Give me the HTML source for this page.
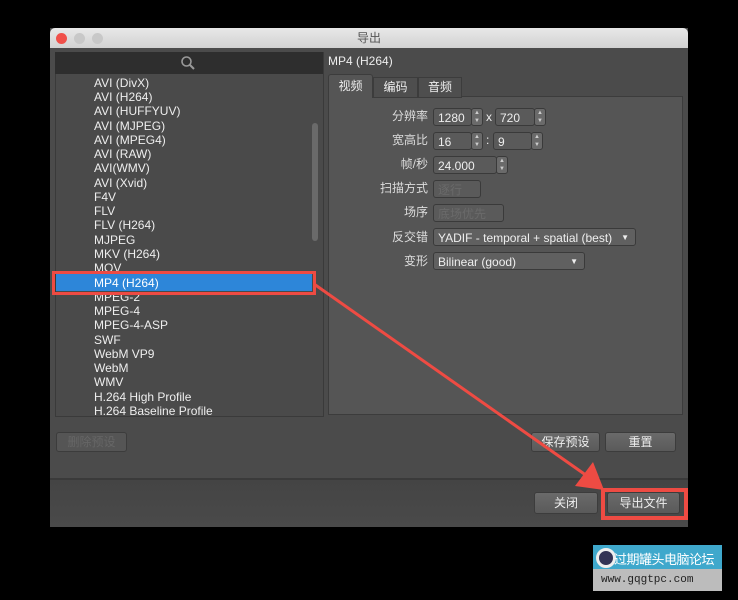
<!DOCTYPE html>
<html><head><meta charset="utf-8"><style>
body{margin:0;width:738px;height:600px;background:#000;position:relative;overflow:hidden;font-family:"Liberation Sans","Noto Sans CJK SC",sans-serif;}
.a{position:absolute}
.win{left:50px;top:28px;width:638px;height:499px;background:#4b4b4b;}
.title{left:50px;top:28px;width:638px;height:20px;background:linear-gradient(#e8e8e8,#d2d2d2);border-radius:5px 5px 0 0;text-align:center;font-size:12px;color:#555;line-height:20px}
.dot{width:11px;height:11px;border-radius:50%;top:33px}
.list{left:55px;top:52px;width:267px;height:363px;background:#4a4a4a;border:1px solid #3a3a3a;overflow:hidden}
.search{left:55px;top:52px;width:268px;height:22px;background:#2e2e2e}
.item{position:absolute;left:38px;font-size:12px;color:#eee;line-height:14px}
.lbl{position:absolute;font-size:12px;color:#ddd;text-align:right;width:60px;left:368px}
.fld{position:absolute;background:#5a5a5a;border:1px solid #3a3a3a;border-radius:3px;height:18px;font-size:12px;color:#eee;line-height:18px;padding-left:4px;box-sizing:border-box}
.btn{position:absolute;background:linear-gradient(#6a6a6a,#5a5a5a);border:1px solid #3c3c3c;border-radius:3px;font-size:12px;color:#eee;text-align:center;box-sizing:border-box}
.sp{position:absolute;width:12px;height:18px;background:#6a6a6a;border:1px solid #3a3a3a;border-radius:3px;box-sizing:border-box;font-size:6px;color:#ccc;text-align:center;line-height:8px}
</style></head><body>
<div class="a win"></div>
<div class="a title">导出</div>
<div class="a dot" style="left:56px;background:#f0504a"></div>
<div class="a dot" style="left:74px;background:#c8c8c8"></div>
<div class="a dot" style="left:92px;background:#c8c8c8"></div>
<div class="a list">
<div style="position:absolute;left:0;top:220px;width:256px;height:18px;background:#2d86d9"></div>
<div style="position:absolute;left:256px;top:70px;width:6px;height:118px;background:#6a6a6a;border-radius:3px"></div>
<div class="item" style="top:23px">AVI (DivX)</div>
<div class="item" style="top:37px">AVI (H264)</div>
<div class="item" style="top:51px">AVI (HUFFYUV)</div>
<div class="item" style="top:66px">AVI (MJPEG)</div>
<div class="item" style="top:80px">AVI (MPEG4)</div>
<div class="item" style="top:94px">AVI (RAW)</div>
<div class="item" style="top:108px">AVI(WMV)</div>
<div class="item" style="top:123px">AVI (Xvid)</div>
<div class="item" style="top:137px">F4V</div>
<div class="item" style="top:151px">FLV</div>
<div class="item" style="top:165px">FLV (H264)</div>
<div class="item" style="top:180px">MJPEG</div>
<div class="item" style="top:194px">MKV (H264)</div>
<div class="item" style="top:208px">MOV</div>
<div class="item" style="top:223px;color:#fff">MP4 (H264)</div>
<div class="item" style="top:237px">MPEG-2</div>
<div class="item" style="top:251px">MPEG-4</div>
<div class="item" style="top:265px">MPEG-4-ASP</div>
<div class="item" style="top:280px">SWF</div>
<div class="item" style="top:294px">WebM VP9</div>
<div class="item" style="top:308px">WebM</div>
<div class="item" style="top:322px">WMV</div>
<div class="item" style="top:337px">H.264 High Profile</div>
<div class="item" style="top:351px">H.264 Baseline Profile</div>
</div>
<div class="a search"><svg class="a" style="left:125px;top:3px" width="16" height="16"><circle cx="6.5" cy="6.5" r="4.5" stroke="#999" stroke-width="1.6" fill="none"/><line x1="10" y1="10" x2="14" y2="14" stroke="#999" stroke-width="2"/></svg></div>
<div class="a" style="left:52px;top:271px;width:258px;height:18px;border:3px solid #ee4b43"></div>
<div class="a" style="left:328px;top:54px;font-size:12px;color:#eee">MP4 (H264)</div>
<div class="a" style="left:328px;top:96px;width:353px;height:317px;background:#555;border:1px solid #3c3c3c"></div>
<div class="a" style="left:328px;top:74px;width:43px;height:23px;background:#555;border:1px solid #3c3c3c;border-bottom:none;border-radius:3px 3px 0 0;font-size:12px;color:#eee;text-align:center;line-height:22px">视频</div>
<div class="a" style="left:373px;top:77px;width:43px;height:19px;background:#4e4e4e;border:1px solid #3c3c3c;font-size:12px;color:#eee;text-align:center;line-height:19px">编码</div>
<div class="a" style="left:418px;top:77px;width:42px;height:19px;background:#4e4e4e;border:1px solid #3c3c3c;font-size:12px;color:#eee;text-align:center;line-height:19px">音频</div>
<div class="lbl" style="top:107px">分辨率</div>
<div class="fld" style="left:433px;top:108px;width:39px">1280</div><div class="sp" style="left:471px;top:108px">▲<br>▼</div>
<div class="a" style="left:486px;top:110px;font-size:12px;color:#eee">x</div>
<div class="fld" style="left:495px;top:108px;width:40px">720</div><div class="sp" style="left:534px;top:108px">▲<br>▼</div>
<div class="lbl" style="top:131px">宽高比</div>
<div class="fld" style="left:433px;top:132px;width:39px">16</div><div class="sp" style="left:471px;top:132px">▲<br>▼</div>
<div class="a" style="left:486px;top:133px;font-size:12px;color:#eee">:</div>
<div class="fld" style="left:493px;top:132px;width:39px">9</div><div class="sp" style="left:531px;top:132px">▲<br>▼</div>
<div class="lbl" style="top:155px">帧/秒</div>
<div class="fld" style="left:433px;top:156px;width:64px">24.000</div><div class="sp" style="left:496px;top:156px">▲<br>▼</div>
<div class="lbl" style="top:179px">扫描方式</div>
<div class="fld" style="left:433px;top:180px;width:48px;background:#5a5a5a;color:#6a6a6a">逐行</div>
<div class="lbl" style="top:203px">场序</div>
<div class="fld" style="left:433px;top:204px;width:71px;color:#6a6a6a">底场优先</div>
<div class="lbl" style="top:228px">反交错</div>
<div class="fld" style="left:433px;top:228px;width:203px;background:#606060">YADIF - temporal + spatial (best)<span style="position:absolute;right:6px;font-size:8px">▼</span></div>
<div class="lbl" style="top:252px">变形</div>
<div class="fld" style="left:433px;top:252px;width:152px;background:#606060">Bilinear (good)<span style="position:absolute;right:6px;font-size:8px">▼</span></div>
<div class="btn" style="left:56px;top:432px;width:71px;height:20px;line-height:18px;color:#666;background:#555">删除预设</div>
<div class="btn" style="left:531px;top:432px;width:69px;height:20px;line-height:18px">保存预设</div>
<div class="btn" style="left:605px;top:432px;width:71px;height:20px;line-height:18px">重置</div>
<div class="a" style="left:50px;top:478px;width:638px;height:47px;background:linear-gradient(#444,#4a4a4a);border-top:2px solid #3a3a3a"></div>
<div class="btn" style="left:534px;top:492px;width:64px;height:22px;line-height:20px">关闭</div>
<div class="btn" style="left:607px;top:492px;width:73px;height:22px;line-height:20px">导出文件</div>
<div class="a" style="left:601px;top:488px;width:79px;height:24px;border:4px solid #ee4b43"></div>
<svg class="a" style="left:0;top:0" width="738" height="600"><line x1="314" y1="284" x2="590" y2="478" stroke="#ee4b43" stroke-width="3"/><polygon points="604,490 575,486 593,462" fill="#ee4b43"/></svg>
<div class="a" style="left:593px;top:545px;width:129px;height:46px;background:#bcbcbc"></div>
<div class="a" style="left:593px;top:545px;width:129px;height:24px;background:#3fa8cc"></div>
<div class="a" style="left:596px;top:548px;width:14px;height:14px;border-radius:50%;border:3px solid #eee;background:#335"></div>
<div class="a" style="left:614px;top:549px;font-size:13px;color:#fff;letter-spacing:-0.5px">过期罐头电脑论坛</div>
<div class="a" style="left:601px;top:574px;font-size:11px;color:#222;font-family:'Liberation Mono',monospace">www.gqgtpc.com</div>
</body></html>
